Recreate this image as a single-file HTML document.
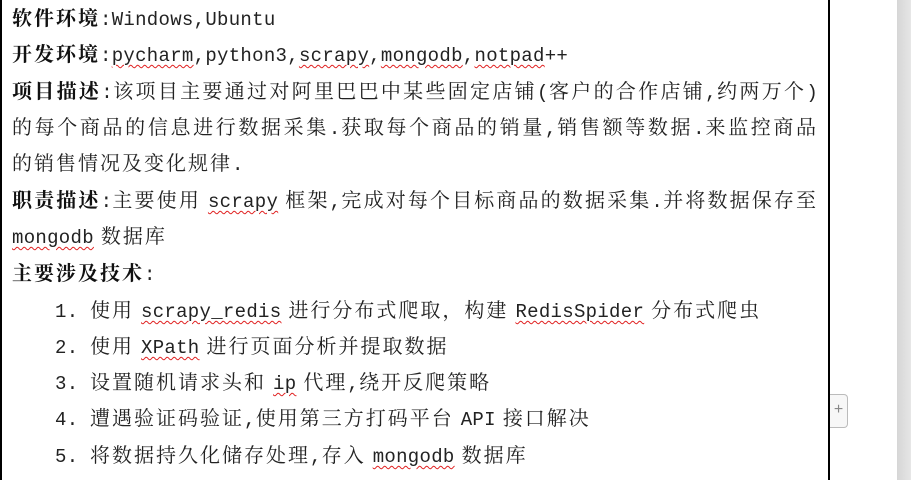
<!DOCTYPE html>
<html><head><meta charset="utf-8"><style>
html,body{margin:0;padding:0;background:#fff;width:911px;height:480px;overflow:hidden;position:relative}
.l{position:absolute;left:12px;height:36px;line-height:36px;font-size:20px;letter-spacing:2px;color:#222;white-space:nowrap;
font-family:"Liberation Mono","Noto Serif CJK SC",serif}
.j{width:806px;text-align:justify;text-align-last:justify}
b{font-weight:700;color:#111;font-family:"Liberation Mono","Noto Serif CJK SC",serif}
u,.e{font-size:19px;letter-spacing:0.3px}
u{text-decoration:underline wavy #e02020;text-decoration-thickness:1px;text-underline-offset:3px}
i{display:inline-block;width:7px}
.n{left:55px}.t{left:90px}
.bl{position:absolute;left:0;top:0;width:2px;height:480px;background:#000}
.br{position:absolute;left:828px;top:0;width:2px;height:480px;background:#000}
.sb{position:absolute;left:897px;top:0;width:14px;height:480px;background:linear-gradient(90deg,#d6d6d6,#e6e6e6)}
.plus{position:absolute;left:830px;top:394px;width:17px;height:32px;background:#f7f7f7;border:1px solid #bbb;border-left:none;border-radius:0 4px 4px 0;color:#888;font:16px "Liberation Sans",sans-serif;text-align:center;line-height:30px}
</style></head><body>
<div class="bl"></div><div class="br"></div><div class="sb"></div>
<div class="plus">+</div>
<div class="l" style="top:2px"><b>软件环境</b><span class="e">:Windows,Ubuntu</span></div>
<div class="l" style="top:38px"><b>开发环境</b><span class="e">:<u>pycharm</u>,python3,<u>scrapy</u>,<u>mongodb</u>,<u>notpad</u>++</span></div>
<div class="l j" style="top:75px"><b>项目描述</b><span class="e">:</span>该项目主要通过对阿里巴巴中某些固定店铺<span class="e">(</span>客户的合作店铺<span class="e">,</span>约两万个<span class="e">)</span></div>
<div class="l j" style="top:111px">的每个商品的信息进行数据采集<span class="e">.</span>获取每个商品的销量<span class="e">,</span>销售额等数据<span class="e">.</span>来监控商品</div>
<div class="l" style="top:147px">的销售情况及变化规律<span class="e">.</span></div>
<div class="l j" style="top:184px"><b>职责描述</b><span class="e">:</span>主要使用<i></i><u>scrapy</u><i></i>框架<span class="e">,</span>完成对每个目标商品的数据采集<span class="e">.</span>并将数据保存至</div>
<div class="l" style="top:220px"><u>mongodb</u><i></i>数据库</div>
<div class="l" style="top:257px"><b>主要涉及技术</b><span class="e">:</span></div>
<div class="l n e" style="top:294px">1.</div><div class="l t" style="top:294px">使用<i></i><u>scrapy_redis</u><i></i>进行分布式爬取，构建<i></i><u>RedisSpider</u><i></i>分布式爬虫</div>
<div class="l n e" style="top:330px">2.</div><div class="l t" style="top:330px">使用<i></i><u>XPath</u><i></i>进行页面分析并提取数据</div>
<div class="l n e" style="top:366px">3.</div><div class="l t" style="top:366px">设置随机请求头和<i></i><u>ip</u><i></i>代理<span class="e">,</span>绕开反爬策略</div>
<div class="l n e" style="top:402px">4.</div><div class="l t" style="top:402px">遭遇验证码验证<span class="e">,</span>使用第三方打码平台<i></i><span class="e">API</span><i></i>接口解决</div>
<div class="l n e" style="top:439px">5.</div><div class="l t" style="top:439px">将数据持久化储存处理<span class="e">,</span>存入<i></i><u>mongodb</u><i></i>数据库</div>
</body></html>
